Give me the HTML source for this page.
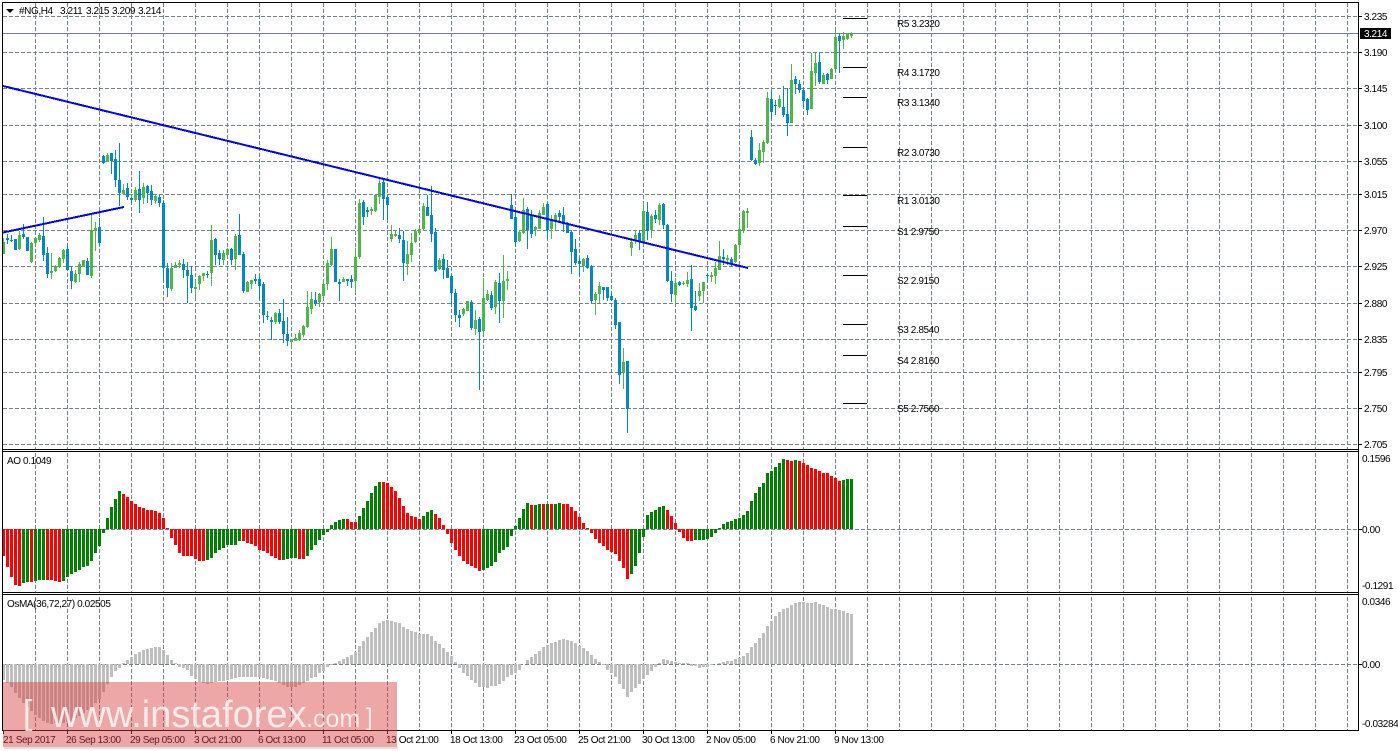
<!DOCTYPE html>
<html><head><meta charset="utf-8"><title>#NG,H4</title>
<style>
html,body{margin:0;padding:0;background:#fff;width:1398px;height:751px;overflow:hidden}
svg{display:block}
text{font-family:"Liberation Sans",sans-serif;font-size:10px;letter-spacing:-.4px;fill:#000}
</style></head><body>
<svg width="1398" height="751" viewBox="0 0 1398 751" xmlns="http://www.w3.org/2000/svg">
<rect width="1398" height="751" fill="#fff"/>
<!-- grid -->
<g shape-rendering="crispEdges" fill="none" stroke="#708090" stroke-width="1" stroke-dasharray="4 2">
<path d="M35.5 3V730M67.5 3V730M99.5 3V730M131.5 3V730M163.5 3V730M195.5 3V730M227.5 3V730M259.5 3V730M291.5 3V730M323.5 3V730M355.5 3V730M387.5 3V730M419.5 3V730M451.5 3V730M483.5 3V730M515.5 3V730M547.5 3V730M579.5 3V730M611.5 3V730M643.5 3V730M675.5 3V730M707.5 3V730M739.5 3V730M771.5 3V730M803.5 3V730M835.5 3V730M867.5 3V730M899.5 3V730M931.5 3V730M963.5 3V730M995.5 3V730M1027.5 3V730M1059.5 3V730M1091.5 3V730M1123.5 3V730M1155.5 3V730M1187.5 3V730M1219.5 3V730M1251.5 3V730M1283.5 3V730M1315.5 3V730M1347.5 3V730"/>
<path d="M3 16.5H1358M3 52.5H1358M3 88.5H1358M3 125.5H1358M3 161.5H1358M3 194.5H1358M3 230.5H1358M3 266.5H1358M3 303.5H1358M3 339.5H1358M3 372.5H1358M3 408.5H1358M3 444.5H1358M3 529.5H1358M3 664.5H1358"/>
</g>
<path d="M3 33.5H1358" stroke="#708090" fill="none" shape-rendering="crispEdges"/>
<!-- AO -->
<g transform="translate(.5 0)" fill="none" stroke-width="3" shape-rendering="crispEdges">
<path stroke="#f00" d="M3 529V556M7 529V567M11 529V577M15 529V585M19 529V586M31 529V582M47 529V580M51 529V580M55 529V581M59 529V582M123 529V494M127 529V497M131 529V501M135 529V504M139 529V507M143 529V508M147 529V510M151 529V510M155 529V511M159 529V513M163 529V518M167 529V528M171 529V538M175 529V545M179 529V553M183 529V556M187 529V556M191 529V556M195 529V559M199 529V561M203 529V561M243 529V541M247 529V543M251 529V544M255 529V546M259 529V550M263 529V551M267 529V553M271 529V556M275 529V558M279 529V560M299 529V559M303 529V559M347 529V519M351 529V522M355 529V522M383 529V482M387 529V483M391 529V487M395 529V491M399 529V498M403 529V506M407 529V513M411 529V516M415 529V517M419 529V519M435 529V514M439 529V518M443 529V525M447 529V534M451 529V543M455 529V550M459 529V556M463 529V561M467 529V564M471 529V566M475 529V568M479 529V571M531 529V505M543 529V504M551 529V504M563 529V504M567 529V504M571 529V507M575 529V511M579 529V517M583 529V523M587 529V528M591 529V533M595 529V539M599 529V543M603 529V546M607 529V550M611 529V552M615 529V554M619 529V561M623 529V568M627 529V579M667 529V510M671 529V516M675 529V523M679 529V532M683 529V538M687 529V541M691 529V541M791 529V461M787 529V460M799 529V461M803 529V463M807 529V465M811 529V468M815 529V469M819 529V471M823 529V473M827 529V473M831 529V476M835 529V478M839 529V481"/>
<path stroke="#008000" d="M23 529V583M27 529V582M35 529V581M39 529V580M43 529V580M63 529V581M67 529V577M71 529V574M75 529V572M79 529V570M83 529V567M87 529V566M91 529V561M95 529V553M99 529V546M103 529V533M107 529V518M111 529V507M115 529V499M119 529V491M207 529V560M211 529V558M215 529V553M219 529V550M223 529V548M227 529V545M231 529V545M235 529V545M239 529V541M283 529V560M287 529V559M291 529V558M295 529V558M307 529V556M311 529V550M315 529V545M319 529V540M323 529V535M327 529V532M331 529V525M335 529V522M339 529V520M343 529V519M359 529V516M363 529V508M367 529V501M371 529V493M375 529V486M379 529V482M423 529V516M427 529V512M431 529V510M483 529V570M487 529V568M491 529V566M495 529V562M499 529V553M503 529V550M507 529V547M511 529V536M515 529V526M519 529V518M523 529V509M527 529V503M535 529V505M539 529V504M547 529V504M555 529V504M559 529V503M631 529V574M635 529V566M639 529V553M643 529V537M647 529V515M651 529V512M655 529V510M659 529V507M663 529V506M695 529V540M699 529V540M703 529V540M707 529V539M711 529V537M715 529V533M719 529V528M723 529V524M727 529V522M731 529V521M735 529V519M739 529V518M743 529V515M747 529V511M751 529V501M755 529V493M759 529V487M763 529V483M767 529V473M771 529V471M775 529V467M779 529V463M783 529V459M795 529V460M843 529V480M847 529V479M851 529V479"/>
<!-- OsMA -->
<path stroke="#bebebe" d="M3 664V680M7 664V683M11 664V687M15 664V693M19 664V698M23 664V703M27 664V707M31 664V711M35 664V715M39 664V718M43 664V721M47 664V723M51 664V724M55 664V723M59 664V724M63 664V723M67 664V722M71 664V721M75 664V718M79 664V716M83 664V713M87 664V710M91 664V707M95 664V703M99 664V699M103 664V692M107 664V684M111 664V677M115 664V671M119 664V668M123 664V663M127 664V660M131 664V657M135 664V654M139 664V652M143 664V650M147 664V649M151 664V648M155 664V647M159 664V647M163 664V650M167 664V655M171 664V660M175 664V663M179 664V667M183 664V668M187 664V670M191 664V676M195 664V679M199 664V682M203 664V683M207 664V684M211 664V683M215 664V682M219 664V681M223 664V681M227 664V680M231 664V679M235 664V678M239 664V677M243 664V677M247 664V677M251 664V677M255 664V677M259 664V677M263 664V678M267 664V679M271 664V680M275 664V681M279 664V683M283 664V685M287 664V687M291 664V687M295 664V687M299 664V685M303 664V683M307 664V681M311 664V678M315 664V677M319 664V673M323 664V671M327 664V667M331 664V665M335 664V663M339 664V661M343 664V659M347 664V657M351 664V655M355 664V652M359 664V646M363 664V641M367 664V637M371 664V632M375 664V628M379 664V623M383 664V621M387 664V620M391 664V621M395 664V622M399 664V623M403 664V627M407 664V629M411 664V631M415 664V632M419 664V634M423 664V634M427 664V634M431 664V636M435 664V641M439 664V644M443 664V648M447 664V652M451 664V656M455 664V662M459 664V668M463 664V673M467 664V676M471 664V680M475 664V683M479 664V687M483 664V687M487 664V688M491 664V686M495 664V686M499 664V684M503 664V681M507 664V677M511 664V675M515 664V673M519 664V670M523 664V664M527 664V660M531 664V657M535 664V654M539 664V651M543 664V647M547 664V645M551 664V643M555 664V642M559 664V640M563 664V639M567 664V640M571 664V641M575 664V643M579 664V646M583 664V648M587 664V651M591 664V655M595 664V659M599 664V662M603 664V665M607 664V670M611 664V673M615 664V677M619 664V684M623 664V689M627 664V697M631 664V692M635 664V688M639 664V684M643 664V679M647 664V675M651 664V671M655 664V667M659 664V663M663 664V659M667 664V660M671 664V661M675 664V662M679 664V663M683 664V663M687 664V663M691 664V666M695 664V666M699 664V668M703 664V667M707 664V667M711 664V665M715 664V664M719 664V663M723 664V662M727 664V661M731 664V661M735 664V659M739 664V658M743 664V656M747 664V653M751 664V647M755 664V643M759 664V638M763 664V633M767 664V626M771 664V621M775 664V616M779 664V612M783 664V609M787 664V608M791 664V605M795 664V603M799 664V602M803 664V602M807 664V603M811 664V603M815 664V602M819 664V604M823 664V605M827 664V607M831 664V609M835 664V609M839 664V610M843 664V611M847 664V613M851 664V614"/>
</g>
<!-- candles -->
<g transform="translate(.5 0)" fill="none" shape-rendering="crispEdges">
<path stroke="#4db848" stroke-width="1" d="M3 238V254M19 231V250M31 242V263M35 237V245M39 233V242M51 253V279M55 265V272M59 257V268M63 249V263M75 270V283M79 262V282M83 260V267M91 215V278M95 222V251M107 153V162M123 184V195M135 187V202M143 183V204M155 195V204M171 263V291M175 262V268M179 260V268M195 280V298M199 275V290M203 273V281M211 225V286M223 250V265M227 248V255M235 234V270M247 281V292M251 280V289M275 312V324M291 339V348M295 334V341M299 330V341M303 325V337M307 291V328M311 292V314M319 293V307M323 283V297M327 260V290M331 237V266M343 277V282M355 248V293M359 199V259M371 207V215M375 194V212M379 179V204M391 225V242M395 230V237M407 241V275M411 233V262M415 229V243M419 228V233M423 203V230M439 258V270M463 308V316M467 301V311M475 310V335M483 278V335M487 290V301M495 280V314M503 255V318M507 271V290M519 230V242M523 198V234M535 226V236M539 210V229M543 203V215M551 215V239M555 213V231M583 258V272M595 292V315M599 282V303M623 348V389M631 238V256M635 230V244M643 202V245M651 214V238M659 203V225M675 278V304M683 281V285M687 272V287M699 283V301M703 282V303M711 272V282M715 262V284M719 241V270M727 255V265M735 244V263M739 218V253M743 210V233M747 208V228M759 143V166M763 140V163M767 92V144M779 95V108M791 64V123M811 53V109M815 53V86M823 73V84M831 68V79M835 31V70M843 32V49M847 33V40M851 32V38"/>
<path stroke="#4db848" stroke-width="3" d="M3 242V254M19 235V249M31 243V262M35 238V243M39 235V240M51 271V273M55 266V271M59 258V267M63 250V259M75 274V282M79 264V274M83 260V267M91 230V276M95 228V231M107 155V162M123 190V194M135 190V200M143 187V198M155 196V201M171 268V289M175 265V268M179 263V265M195 287V289M199 276V284M203 273V276M211 240V273M223 253V260M227 249V255M235 236V259M247 282V292M251 280V284M275 313V322M291 339V342M295 338V341M299 333V340M303 326V335M307 307V327M311 299V309M319 294V302M323 284V296M327 263V284M331 249V265M343 279V282M355 257V281M359 203V257M371 209V211M375 195V211M379 183V197M391 234V239M395 234V236M407 254V264M411 243V255M415 231V242M419 229V233M423 206V229M439 260V269M463 309V314M467 301V311M475 320V329M483 298V331M487 294V300M495 282V307M503 281V301M507 279V281M519 232V241M523 210V233M535 227V230M539 213V229M543 207V215M551 219V229M555 215V221M583 259V266M595 294V300M599 286V294M623 362V373M631 242V248M635 235V240M643 211V242M651 216V230M659 205V220M675 283V295M683 283V284M687 280V284M699 291V296M703 282V291M711 275V277M715 268V276M719 256V270M727 258V260M735 245V262M739 229V245M743 211V231M747 211V213M759 150V163M763 142V152M767 98V143M779 99V107M791 80V123M811 71V109M815 63V73M823 75V84M831 69V79M835 37V69M843 36V40M847 34V39M851 34V36"/>
<path stroke="#0088c6" stroke-width="1" d="M7 234V244M11 235V242M15 239V250M23 224V239M27 237V251M43 217V261M47 247V278M67 244V271M71 266V289M87 258V275M99 218V245M103 155V164M111 153V174M115 150V187M119 143V206M127 183V200M131 197V203M139 171V213M147 185V203M151 185V205M159 195V207M163 200V281M167 263V297M183 259V278M187 262V303M191 266V293M207 271V278M215 238V265M219 250V265M231 248V265M239 214V255M243 252V293M255 274V284M259 274V299M263 282V323M267 311V320M271 317V340M279 309V324M283 299V343M287 317V346M315 292V306M335 249V282M339 279V301M347 279V286M351 275V288M363 200V225M367 207V217M383 180V220M387 195V220M399 228V243M403 231V281M427 195V216M431 186V242M435 228V272M443 254V279M447 260V278M451 275V304M455 289V322M459 310V327M471 300V330M479 317V390M491 291V310M499 273V323M511 194V219M515 210V246M527 207V249M531 210V238M547 203V239M559 210V221M563 207V232M567 222V233M571 230V274M575 239V265M579 258V277M587 255V269M591 265V303M603 287V300M607 287V301M611 292V301M615 298V329M619 322V384M627 361V433M639 230V250M647 202V240M655 210V223M663 203V229M667 224V282M671 271V302M679 281V286M691 265V331M695 291V311M707 274V282M723 249V265M731 257V267M751 130V161M755 158V165M771 91V119M775 100V115M783 86V117M787 88V136M795 76V94M799 80V93M803 89V107M807 98V115M819 53V84M827 73V84M839 33V73"/>
<path stroke="#0088c6" stroke-width="3" d="M7 238V240M11 240V241M15 239V250M23 234V237M27 237V251M43 236V255M47 253V274M67 249V270M71 271V281M87 261V275M99 227V243M103 156V163M111 153V161M115 159V180M119 180V193M127 188V197M131 198V200M139 189V200M147 186V193M151 191V200M159 197V203M163 203V268M167 268V288M183 264V270M187 270V276M191 275V288M207 274V275M215 239V255M219 253V259M231 249V260M239 235V255M243 254V291M255 279V281M259 279V286M263 284V315M267 316V317M271 320V322M279 313V322M283 321V334M287 334V341M315 300V304M335 249V282M339 282V284M347 279V281M351 279V282M363 202V217M367 210V212M383 182V199M387 197V205M399 235V239M403 240V263M427 207V216M431 215V234M435 232V271M443 259V270M447 268V278M451 276V293M455 293V315M459 315V318M471 302V328M479 319V332M491 295V308M499 283V301M511 205V219M515 217V242M527 209V230M531 215V234M547 204V230M559 213V217M563 215V224M567 223V233M571 232V252M575 249V263M579 261V264M587 258V268M591 266V301M603 287V290M607 287V298M611 296V300M615 300V325M619 322V375M627 361V409M639 233V242M647 212V231M655 215V219M663 204V225M667 225V281M671 281V294M679 282V285M691 279V308M695 306V310M707 275V276M723 257V259M731 259V263M751 137V160M755 160V164M771 99V112M775 105V106M783 107V115M787 114V123M795 79V84M799 84V90M803 90V101M807 99V110M819 62V82M827 74V80M839 36V41"/>
</g>
<!-- trend lines -->
<g stroke="#0000ff" stroke-width="2" fill="none" shape-rendering="crispEdges">
<path d="M3 86L748 268"/>
<path d="M3 232.500L124 207"/>
</g>
<!-- pivot levels -->
<path shape-rendering="crispEdges" stroke="#000" fill="none" d="M843 18.500H867M843 67.500H867M843 97.500H867M843 147.500H867M843 195.500H867M843 226.500H867M843 275.500H867M843 324.500H867M843 355.500H867M843 403.500H867"/>
<!-- frames -->
<g shape-rendering="crispEdges">
<rect x="0" y="449" width="1358" height="2" fill="#fff"/>
<rect x="0" y="592" width="1358" height="2" fill="#fff"/>
<rect x="0" y="730" width="1398" height="21" fill="#fff"/>
<path fill="none" stroke="#000" d="M2.500 2.500H1358.500V730.500H2.500ZM2 449.500H1359M2 451.500H1359M2 592.500H1359M2 594.500H1359"/>
<!-- ticks -->
<path fill="none" stroke="#000" d="M1359 16.500H1362M1359 52.500H1362M1359 88.500H1362M1359 125.500H1362M1359 161.500H1362M1359 194.500H1362M1359 230.500H1362M1359 266.500H1362M1359 303.500H1362M1359 339.500H1362M1359 372.500H1362M1359 408.500H1362M1359 444.500H1362M1359 529.500H1362M1359 664.500H1362M3.500 731V734M67.500 731V734M131.500 731V734M195.500 731V734M259.500 731V734M323.500 731V734M387.500 731V734M451.500 731V734M515.500 731V734M579.500 731V734M643.500 731V734M707.500 731V734M771.500 731V734M835.500 731V734"/>
<rect x="1360" y="28" width="31" height="11" fill="#000"/>
</g>
<!-- header -->
<path d="M6 9H14L10 13Z" fill="#000"/>
<text x="19" y="14">#NG,H4</text>
<text x="60" y="14">3.211</text>
<text x="86" y="14">3.215</text>
<text x="112" y="14">3.209</text>
<text x="138" y="14">3.214</text>
<text x="7" y="464">AO 0.1049</text>
<text x="7" y="607">OsMA(36,72,27) 0.02505</text>
<!-- pivot labels -->
<text x="897" y="27">R5 3.2320</text>
<text x="897" y="76">R4 3.1720</text>
<text x="897" y="106">R3 3.1340</text>
<text x="897" y="156">R2 3.0730</text>
<text x="897" y="204">R1 3.0130</text>
<text x="897" y="235">S1 2.9750</text>
<text x="897" y="284">S2 2.9150</text>
<text x="897" y="333">S3 2.8540</text>
<text x="897" y="364">S4 2.8160</text>
<text x="897" y="412">S5 2.7560</text>
<!-- price axis -->
<text x="1364" y="20">3.235</text>
<text x="1364" y="37" style="fill:#fff">3.214</text>
<text x="1364" y="56">3.190</text>
<text x="1364" y="92">3.145</text>
<text x="1364" y="129">3.100</text>
<text x="1364" y="165">3.055</text>
<text x="1364" y="198">3.015</text>
<text x="1364" y="234">2.970</text>
<text x="1364" y="270">2.925</text>
<text x="1364" y="307">2.880</text>
<text x="1364" y="343">2.835</text>
<text x="1364" y="376">2.795</text>
<text x="1364" y="412">2.750</text>
<text x="1364" y="448">2.705</text>
<text x="1362" y="462">0.1596</text>
<text x="1362" y="533">0.00</text>
<text x="1362" y="589">-0.1291</text>
<text x="1362" y="605">0.0346</text>
<text x="1362" y="668">0.00</text>
<text x="1362" y="727">-0.03284</text>
<!-- time axis -->
<text x="3" y="743">21 Sep 2017</text>
<text x="66" y="743">26 Sep 13:00</text>
<text x="130" y="743">29 Sep 05:00</text>
<text x="194" y="743">3 Oct 21:00</text>
<text x="258" y="743">6 Oct 13:00</text>
<text x="322" y="743">11 Oct 05:00</text>
<text x="386" y="743">13 Oct 21:00</text>
<text x="450" y="743">18 Oct 13:00</text>
<text x="514" y="743">23 Oct 05:00</text>
<text x="578" y="743">25 Oct 21:00</text>
<text x="642" y="743">30 Oct 13:00</text>
<text x="706" y="743">2 Nov 05:00</text>
<text x="770" y="743">6 Nov 21:00</text>
<text x="834" y="743">9 Nov 13:00</text>
<!-- watermark -->
<rect x="3" y="682" width="394" height="65" fill="#d63c3c" fill-opacity=".45"/>
<rect x="4" y="747" width="394" height="2" fill="#000" fill-opacity=".12"/>
<g opacity=".78">
<text x="23" y="724" style="font-size:34px;letter-spacing:0;fill:#fff">[</text>
<text x="51" y="727" style="font-size:38px;letter-spacing:0;fill:#fff">www.instaforex</text>
<text x="306" y="727" style="font-size:25px;letter-spacing:0;fill:#fff">.com</text>
<text x="366" y="725" style="font-size:24px;letter-spacing:0;fill:#fff">]</text>
</g>
</svg>
</body></html>
